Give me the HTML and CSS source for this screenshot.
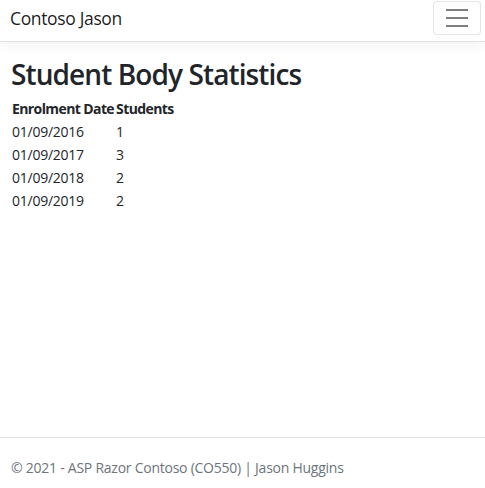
FILE: index.html
```html
<!DOCTYPE html>
<html lang="en">
<head>
<meta charset="utf-8">
<title>Student Body Statistics</title>
<link rel="stylesheet" href="styles.css">
</head>
<body>
<header class="navbar">
  <a class="brand" href="#">Contoso Jason</a>
  <button class="toggler" type="button" aria-label="Toggle navigation">
    <span class="bar"></span><span class="bar"></span><span class="bar"></span>
  </button>
</header>
<main class="content">
  <h1 class="title">Student Body Statistics</h1>
  <table class="stats">
    <thead>
      <tr><th>Enrolment Date</th><th>Students</th></tr>
    </thead>
    <tbody>
      <tr><td>01/09/2016</td><td>1</td></tr>
      <tr><td>01/09/2017</td><td>3</td></tr>
      <tr><td>01/09/2018</td><td>2</td></tr>
      <tr><td>01/09/2019</td><td>2</td></tr>
    </tbody>
  </table>
</main>
<footer class="footer">© 2021 - ASP Razor Contoso (CO550) | Jason Huggins</footer>
</body>
</html>
```

FILE: styles.css
```css
html, body {
  margin: 0;
  padding: 0;
}
body {
  font-family: "Open Sans", "Noto Sans", sans-serif;
  font-size: 14px;
  line-height: 1.5;
  letter-spacing: -0.25px;
  color: #212529;
  background: #fff;
  min-height: 100vh;
  display: flex;
  flex-direction: column;
  overflow: hidden;
}
.navbar {
  height: 42px;
  box-sizing: border-box;
  border-bottom: 1px solid #dee2e6;
  box-shadow: 0 .25rem .75rem rgba(0, 0, 0, .05);
  display: flex;
  align-items: flex-start;
  justify-content: space-between;
  padding: 0 4px 0 10px;
}
.brand {
  color: rgba(0, 0, 0, .9);
  text-decoration: none;
  font-size: 17.5px;
  line-height: 36px;
  letter-spacing: -0.35px;
}
.toggler {
  margin-top: 1px;
  width: 48px;
  height: 34px;
  border: 1px solid rgba(0, 0, 0, .1);
  border-radius: 4px;
  background: #fff;
  display: flex;
  flex-direction: column;
  justify-content: center;
  align-items: center;
  gap: 6px;
  padding: 0;
}
.bar {
  display: block;
  width: 22px;
  height: 2px;
  background: rgba(0, 0, 0, .5);
}
.content {
  flex: 1;
  padding: 0 11px;
}
.title {
  margin: 16px 0 5px;
  font-size: 28px;
  font-weight: 600;
  line-height: 1.2;
  letter-spacing: -0.9px;
}
.stats {
  border-collapse: collapse;
}
.stats th, .stats td {
  padding: 1px;
  text-align: left;
}
.stats th {
  font-weight: 700;
  letter-spacing: -0.6px;
}
.footer {
  height: 51px;
  box-sizing: border-box;
  border-top: 1px solid #dee2e6;
  line-height: 60px;
  padding-left: 11px;
  color: #6c757d;
  white-space: nowrap;
}
```
